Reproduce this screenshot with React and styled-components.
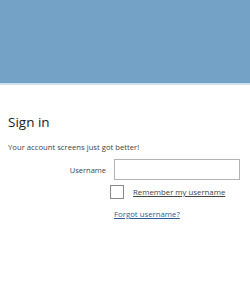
import styled, { createGlobalStyle } from "styled-components";

const Global = createGlobalStyle`
  html, body {
    margin: 0;
    padding: 0;
    background: #ffffff;
    font-family: "Open Sans", "Liberation Sans", sans-serif;
  }
`;

const Page = styled.div`
  width: 250px;
  height: 300px;
  overflow: hidden;
  background: #fff;
`;

const Banner = styled.header`
  height: 83px;
  background: #74a2c7;
  border-bottom: 2px solid #cfe0ee;
`;

const Content = styled.main`
  padding: 28px 10px 0 8px;
`;

const Title = styled.h1`
  margin: 0;
  font-size: 13.5px;
  font-weight: 400;
  color: #222;
  line-height: 18px;
`;

const Subtitle = styled.p`
  margin: 10px 0 0;
  font-size: 7.7px;
  color: #444;
  line-height: 12px;
`;

const Form = styled.form`
  margin-top: 6px;
  display: grid;
  grid-template-columns: 102px 1fr;
  row-gap: 5px;
  align-items: center;
`;

const Label = styled.label`
  text-align: right;
  padding-right: 4px;
  font-size: 7.5px;
  color: #444;
`;

const Input = styled.input`
  box-sizing: border-box;
  width: calc(100% - 4px);
  height: 21px;
  border: 1px solid #b3b3b3;
  margin: 0 0 0 4px;
  outline: none;
`;

const CheckRow = styled.div`
  grid-column: 2;
  display: flex;
  align-items: center;
  gap: 9px;
`;

const Box = styled.span`
  box-sizing: border-box;
  width: 14px;
  height: 14px;
  border: 1px solid #8a8a8a;
  background: #fff;
`;

const Link = styled.a`
  font-size: 7.8px;
  line-height: 12px;
  color: ${(p) => (p.$blue ? "#2b5c96" : "#444")};
  text-decoration: underline;
  cursor: pointer;
`;

const LinkRow = styled.div`
  grid-column: 2;
  margin: 1px 0 0 4px;
  line-height: 12px;
`;

export default function App() {
  return (
    <Page>
      <Global />
      <Banner />
      <Content>
        <Title>Sign in</Title>
        <Subtitle>Your account screens just got better!</Subtitle>
        <Form>
          <Label>Username</Label>
          <Input type="text" />
          <CheckRow>
            <Box />
            <Link>Remember my username</Link>
          </CheckRow>
          <LinkRow>
            <Link $blue>Forgot username?</Link>
          </LinkRow>
        </Form>
      </Content>
    </Page>
  );
}
